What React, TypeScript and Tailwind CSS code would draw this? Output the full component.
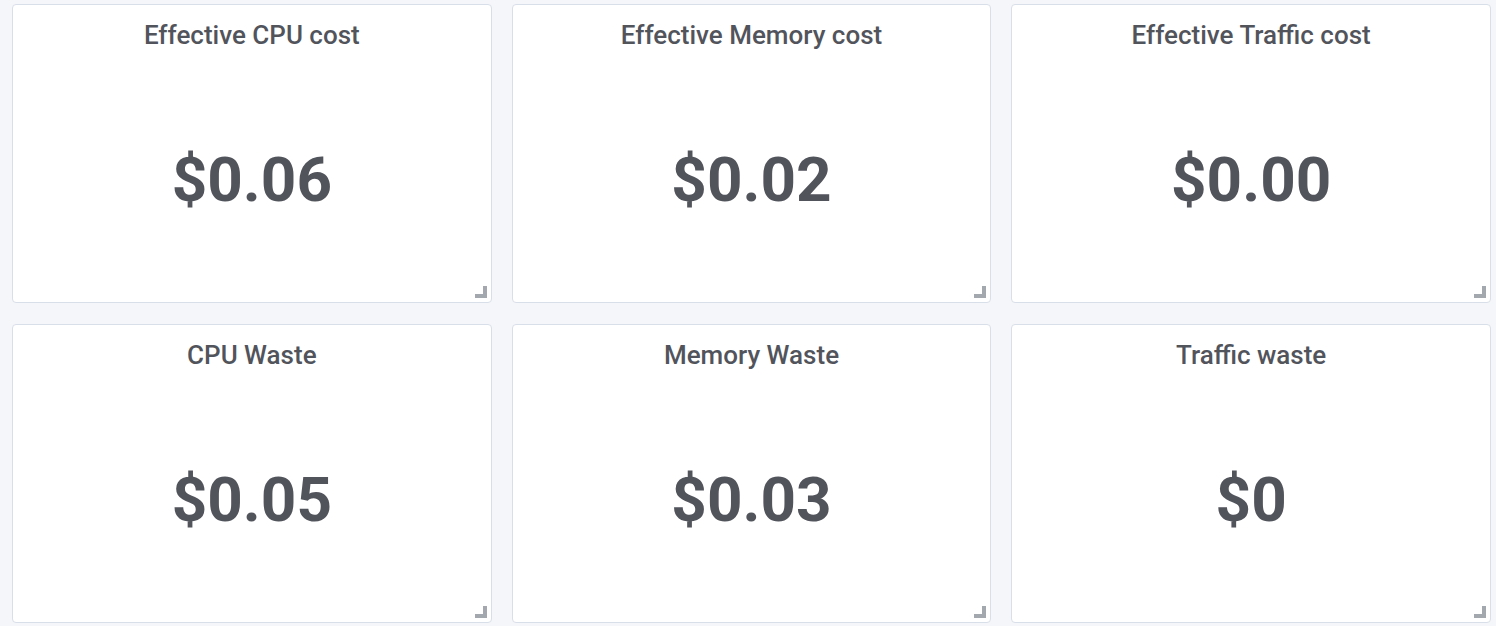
import React from "react";

const panels = [
  { title: "Effective CPU cost", value: "$0.06" },
  { title: "Effective Memory cost", value: "$0.02" },
  { title: "Effective Traffic cost", value: "$0.00" },
  { title: "CPU Waste", value: "$0.05" },
  { title: "Memory Waste", value: "$0.03" },
  { title: "Traffic waste", value: "$0" },
];

function Panel({ title, value }: { title: string; value: string }) {
  return (
    <div className="relative flex flex-col rounded-[4px] border border-[#d9dfe8] bg-white">
      <div className="flex h-[58px] items-center justify-center pt-[1px] text-[26px] font-medium leading-none text-[#52545c]">
        {title}
      </div>
      <div className="flex flex-1 items-center justify-center pb-[6px] text-[62px] font-bold leading-none text-[#52545c]">
        {value}
      </div>
      <div className="absolute bottom-[4px] right-[4px] h-[12px] w-[12px]">
        <div className="absolute bottom-0 right-0 h-[12px] w-[4px] bg-[#a3a7ae]" />
        <div className="absolute bottom-0 right-0 h-[4px] w-[12px] bg-[#a3a7ae]" />
      </div>
    </div>
  );
}

export default function App() {
  return (
    <div
      className="h-[626px] w-[1496px] bg-[#f5f6f9] pl-[12px] pr-[5px] pt-[4px]"
      style={{ fontFamily: "Roboto, 'Liberation Sans', sans-serif" }}
    >
      <div className="grid grid-cols-3 grid-rows-[299px_299px] gap-x-[20px] gap-y-[21px]">
        {panels.map((p) => (
          <Panel key={p.title} title={p.title} value={p.value} />
        ))}
      </div>
    </div>
  );
}
